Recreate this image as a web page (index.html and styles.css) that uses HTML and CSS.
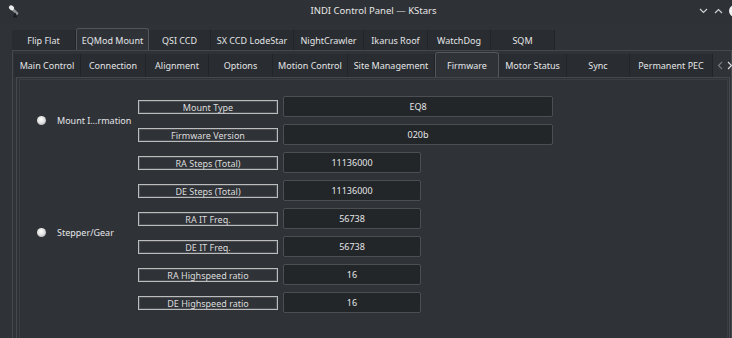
FILE: index.html
```html
<!DOCTYPE html>
<html lang="en">
<head>
    <meta charset="UTF-8">
    <title>INDI Control Panel — KStars</title>
    <link rel="stylesheet" href="styles.css">
</head>
<body>
    <div class="titlebar">
        <div class="app-icon">
            <svg width="14" height="14" viewBox="0 0 14 14">
                <path d="M5.5 5 L10 9.5" stroke="#8e9296" stroke-width="2.6" stroke-linecap="round"/>
                <ellipse cx="4.5" cy="3.8" rx="2.8" ry="2.3" transform="rotate(40 4.5 3.8)" fill="#ececec"/>
                <path d="M8 9 L6.5 13.5 M8 9 L9.5 13.5 M8 9 L8 13.5" stroke="#1b1d20" stroke-width="1.1"/>
            </svg>
        </div>
        <div class="title">INDI Control Panel — KStars</div>
        <div class="win-buttons">
            <svg width="9" height="6" viewBox="0 0 9 6"><path d="M1 1 L4.5 4.5 L8 1" fill="none" stroke="#d0d0d0" stroke-width="1.2"/></svg>
            <svg width="9" height="6" viewBox="0 0 9 6"><path d="M1 5 L4.5 1.5 L8 5" fill="none" stroke="#d0d0d0" stroke-width="1.2"/></svg>
            <span class="close-dot"></span>
        </div>
    </div>

    <div class="outer">
        <div class="tabbar devices">
            <div class="tab">Flip Flat</div>
            <div class="tab active">EQMod Mount</div>
            <div class="tab">QSI CCD</div>
            <div class="tab">SX CCD LodeStar</div>
            <div class="tab">NightCrawler</div>
            <div class="tab">Ikarus Roof</div>
            <div class="tab">WatchDog</div>
            <div class="tab">SQM</div>
        </div>

        <div class="panel">
            <div class="tabbar groups">
                <div class="tab">Main Control</div>
                <div class="tab">Connection</div>
                <div class="tab">Alignment</div>
                <div class="tab">Options</div>
                <div class="tab">Motion Control</div>
                <div class="tab">Site Management</div>
                <div class="tab active">Firmware</div>
                <div class="tab">Motor Status</div>
                <div class="tab">Sync</div>
                <div class="tab">Permanent PEC</div>
                <div class="scroll-arrows">
                    <svg width="6" height="9" viewBox="0 0 6 9"><path d="M5 1 L1.5 4.5 L5 8" fill="none" stroke="#7a7e83" stroke-width="1.1"/></svg>
                    <svg width="6" height="9" viewBox="0 0 6 9"><path d="M1 1 L4.5 4.5 L1 8" fill="none" stroke="#e0e0e0" stroke-width="1.1"/></svg>
                </div>
            </div>

            <div class="inner-panel">
                <div class="frame">
                    <div class="group">
                        <div class="group-label"><span class="led"></span>Mount I…rmation</div>
                        <div class="rows">
                            <div class="row"><div class="name">Mount Type</div><div class="value wide">EQ8</div></div>
                            <div class="row"><div class="name">Firmware Version</div><div class="value wide">020b</div></div>
                        </div>
                    </div>
                    <div class="group">
                        <div class="group-label"><span class="led"></span>Stepper/Gear</div>
                        <div class="rows">
                            <div class="row"><div class="name">RA Steps (Total)</div><div class="value">11136000</div></div>
                            <div class="row"><div class="name">DE Steps (Total)</div><div class="value">11136000</div></div>
                            <div class="row"><div class="name">RA IT Freq.</div><div class="value">56738</div></div>
                            <div class="row"><div class="name">DE IT Freq.</div><div class="value">56738</div></div>
                            <div class="row"><div class="name">RA Highspeed ratio</div><div class="value">16</div></div>
                            <div class="row"><div class="name">DE Highspeed ratio</div><div class="value">16</div></div>
                        </div>
                    </div>
                </div>
            </div>
        </div>
    </div>
</body>
</html>
```

FILE: styles.css
```css
body {
    margin: 0;
    width: 732px;
    height: 338px;
    overflow: hidden;
    background-color: #2f3237;
    color: #e3e5e7;
    font-family: "Noto Sans", "DejaVu Sans", sans-serif;
    font-size: 9px;
}

/* window title */
.titlebar {
    display: flex;
    align-items: center;
    height: 24px;
    background-color: #2e3135;
}

.app-icon {
    width: 40px;
    padding-left: 7px;
    padding-bottom: 3px;
    box-sizing: border-box;
    display: flex;
}

.title {
    flex: 1;
    text-align: center;
    padding-left: 15px;
    padding-bottom: 3px;
    font-size: 9.5px;
    color: #e6e6e6;
}

.win-buttons {
    width: 40px;
    display: flex;
    align-items: center;
    justify-content: flex-end;
    gap: 6px;
    padding-bottom: 3px;
}

.close-dot {
    width: 12px;
    height: 12px;
    border-radius: 50%;
    background-color: #f2f2f2;
    margin-right: -9px;
}

/* tabs */
.outer {
    padding-left: 12px;
    margin-top: 4px;
}

.tabbar {
    display: flex;
    align-items: flex-end;
}

.tab {
    box-sizing: border-box;
    display: flex;
    align-items: center;
    justify-content: center;
    background-color: #292c30;
    border-right: 1px solid #222528;
    white-space: nowrap;
    flex: none;
}

.tab.active {
    background-color: #2f3237;
    border: 1px solid #53575c;
    border-bottom: none;
    border-radius: 3px 3px 0 0;
}

.devices {
    height: 22px;
}

.devices .tab {
    height: 20px;
    padding-top: 1px;
}

.devices .tab.active {
    height: 22px;
    padding-top: 1px;
}

.devices .tab:nth-child(1) { width: 64px; }
.devices .tab:nth-child(2) { width: 73px; }
.devices .tab:nth-child(3) { width: 62px; }
.devices .tab:nth-child(4) { width: 83px; }
.devices .tab:nth-child(5) { width: 70px; }
.devices .tab:nth-child(6) { width: 64px; }
.devices .tab:nth-child(7) { width: 63px; }
.devices .tab:nth-child(8) { width: 64px; }

.panel {
    width: 720px;
    height: 300px;
    box-sizing: border-box;
    border: 1px solid #45494e;
    padding: 1px 1px 0 3px;
}

.groups {
    height: 25px;
    margin-left: -2px;
}

.groups .tab {
    height: 23px;
}

.groups .tab.active {
    height: 25px;
}

.groups .tab:nth-child(1) { width: 67px; }
.groups .tab:nth-child(2) { width: 65px; }
.groups .tab:nth-child(3) { width: 63px; }
.groups .tab:nth-child(4) { width: 64px; }
.groups .tab:nth-child(5) { width: 75px; }
.groups .tab:nth-child(6) { width: 87px; }
.groups .tab:nth-child(7) { width: 64px; }
.groups .tab:nth-child(8) { width: 68px; }
.groups .tab:nth-child(9) { width: 63px; }
.groups .tab:nth-child(10) { width: 83px; }

.scroll-arrows {
    height: 23px;
    display: flex;
    align-items: center;
    gap: 4px;
    padding-left: 4px;
}

.inner-panel {
    height: 270px;
    border: 1px solid #45494e;
    border-bottom: none;
}

.frame {
    margin: 1px 1px 0 2px;
    height: 269px;
    box-sizing: border-box;
    border: 1px solid #3a3e43;
    border-bottom: none;
    padding-top: 16px;
    display: flex;
    flex-direction: column;
    gap: 7px;
}

/* properties */
.group {
    display: flex;
    align-items: center;
}

.group-label {
    width: 118px;
    box-sizing: border-box;
    padding-left: 17px;
    display: flex;
    align-items: center;
    gap: 11px;
}

.led {
    width: 9px;
    height: 9px;
    border-radius: 50%;
    background: radial-gradient(circle at 45% 40%, #ffffff 0%, #e2e2e2 45%, #9c9c9c 100%);
}

.rows {
    display: flex;
    flex-direction: column;
    gap: 7px;
}

.row {
    display: flex;
    align-items: center;
    height: 21px;
}

.name {
    width: 140px;
    height: 14px;
    box-sizing: border-box;
    margin-top: 1px;
    margin-right: 5px;
    border: 1px solid #bcbcbc;
    box-shadow: inset 0 0 0 1px #4a4e53;
    display: flex;
    align-items: center;
    justify-content: center;
    color: #dcdcdc;
}

.value {
    width: 138px;
    height: 21px;
    box-sizing: border-box;
    border: 1px solid #4b4f54;
    border-radius: 2px;
    background-color: #232629;
    display: flex;
    align-items: center;
    justify-content: center;
}

.value.wide {
    width: 270px;
}
```
